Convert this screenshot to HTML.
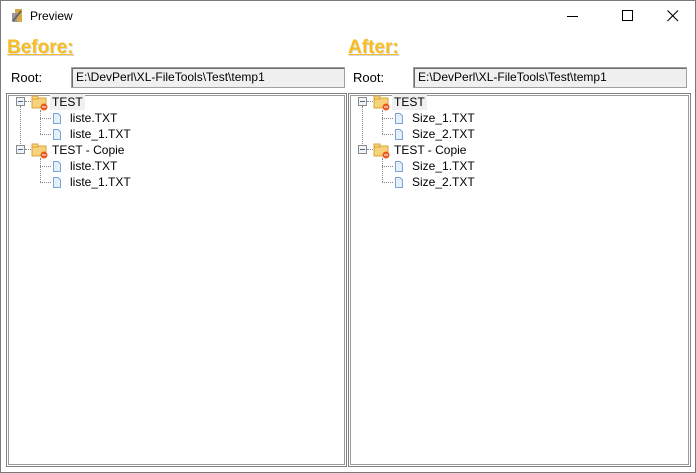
<!DOCTYPE html>
<html><head><style>
body{margin:0;width:696px;height:473px;overflow:hidden;background:#fff;font-family:"Liberation Sans",sans-serif;font-size:12px;color:#000;position:relative}
.win{position:absolute;left:0;top:0;width:694px;height:471px;border:1px solid #7a7a7a;background:#fff}
.a{position:absolute}
.h{font-weight:bold;font-size:19px;color:#f8bd22;text-decoration:underline;text-shadow:1px 1px 0 #d8d8d8}
.tb{position:absolute;height:19px;border:1px solid #a0a0a0;background:#f0f0f0;box-shadow:inset 1px 1px 0 #6e6e6e;font-size:12px;line-height:19px;padding-left:4px;box-sizing:content-box}
.tree{position:absolute;top:92px;height:372px;border:1px solid #828282;box-shadow:inset 0 0 0 1px #fff,inset 0 0 0 2px #9a9a9a;background:#fff}
.row{position:absolute;height:16px;line-height:16px;font-size:12px}
.dv{position:absolute;border-left:1px dotted #888}
.dh{position:absolute;border-top:1px dotted #888}
</style></head><body>
<div class="win">
<svg class="a" style="left:9px;top:7px" width="14" height="16"><rect x="5" y="1" width="7" height="13" fill="#d7a84a"/><rect x="2" y="5" width="5" height="9" fill="#999"/><path d="M3 13 L11 3" stroke="#666" stroke-width="2"/></svg>
<div class="a" style="left:29px;top:8px;font-size:12px">Preview</div>
<div class="a" style="left:566px;top:15px;width:11px;border-top:1px solid #000"></div>
<div class="a" style="left:621px;top:9px;width:9px;height:9px;border:1px solid #000"></div>
<svg class="a" style="left:666px;top:9px" width="12" height="12"><path d="M0.5 0.5L11 11M11 0.5L0.5 11" stroke="#000" stroke-width="1.1"/></svg>
<div class="a h" style="left:6px;top:36px">Before:</div>
<div class="a h" style="left:347px;top:36px">After:</div>
<div class="a" style="left:10px;top:69px;font-size:13px">Root:</div>
<div class="a" style="left:352px;top:69px;font-size:13px">Root:</div>
<div class="tb" style="left:70px;top:66px;width:268px">E:\DevPerl\XL-FileTools\Test\temp1</div>
<div class="tb" style="left:412px;top:66px;width:268px">E:\DevPerl\XL-FileTools\Test\temp1</div>
<div class="tree" style="left:5px;width:339px"></div>
<div class="tree" style="left:347px;width:341px"></div>
</div>
<svg width="0" height="0" style="position:absolute"><defs>
<g id="fold"><rect x="1" y="3" width="14" height="10" fill="#f6d27a" stroke="#d9a63b"/><rect x="1" y="1" width="6" height="3" fill="#f6d27a" stroke="#d9a63b"/><circle cx="13" cy="12" r="3.5" fill="#e85b1c"/><rect x="11" y="11.5" width="4" height="1" fill="#fff"/></g>
<g id="file"><path d="M1.5 0.5H6L8.5 3V10.5H1.5Z" fill="#e6f0fb" stroke="#7aa3d6"/></g>
<g id="minus"><rect x="0.5" y="0.5" width="8" height="8" fill="#f4f4f4" stroke="#8a8a8a"/><path d="M2 4.5H7" stroke="#3b6aa0"/></g>
</defs></svg>
<div id="L"></div>
<script>
function tree(x0,names){
 var h='';
 var rows=[[0,'TEST'],[1,names[0]],[1,names[1]],[0,'TEST - Copie'],[1,names[0]],[1,names[1]]];
 h+='<div class="dv" style="left:'+(x0+20)+'px;top:106px;height:44px"></div>';
 h+='<div class="dv" style="left:'+(x0+40)+'px;top:110px;height:24px"></div>';
 h+='<div class="dv" style="left:'+(x0+40)+'px;top:158px;height:24px"></div>';
 rows.forEach(function(r,i){
  var y=94+i*16;
  if(r[0]==0){
   h+='<svg class="a" style="left:'+(x0+16)+'px;top:'+(y+3)+'px" width="9" height="9"><use href="#minus"/></svg>';
   h+='<div class="dh" style="left:'+(x0+25)+'px;top:'+(y+7)+'px;width:6px"></div>';
   h+='<svg class="a" style="left:'+(x0+31)+'px;top:'+(y+1)+'px" width="17" height="16"><use href="#fold"/></svg>';
   h+='<div class="row" style="left:'+(x0+50)+'px;top:'+y+'px;padding:0 2px;'+(i==0?'background:#f0f0f0':'')+'">'+r[1]+'</div>';
  }else{
   h+='<div class="dh" style="left:'+(x0+40)+'px;top:'+(y+8)+'px;width:11px"></div>';
   h+='<svg class="a" style="left:'+(x0+52)+'px;top:'+(y+3)+'px" width="10" height="11"><use href="#file"/></svg>';
   h+='<div class="row" style="left:'+(x0+70)+'px;top:'+y+'px">'+r[1]+'</div>';
  }
 });
 return h;
}
document.getElementById('L').innerHTML=tree(0,['liste.TXT','liste_1.TXT'])+tree(342,['Size_1.TXT','Size_2.TXT']);
</script>
</body></html>
